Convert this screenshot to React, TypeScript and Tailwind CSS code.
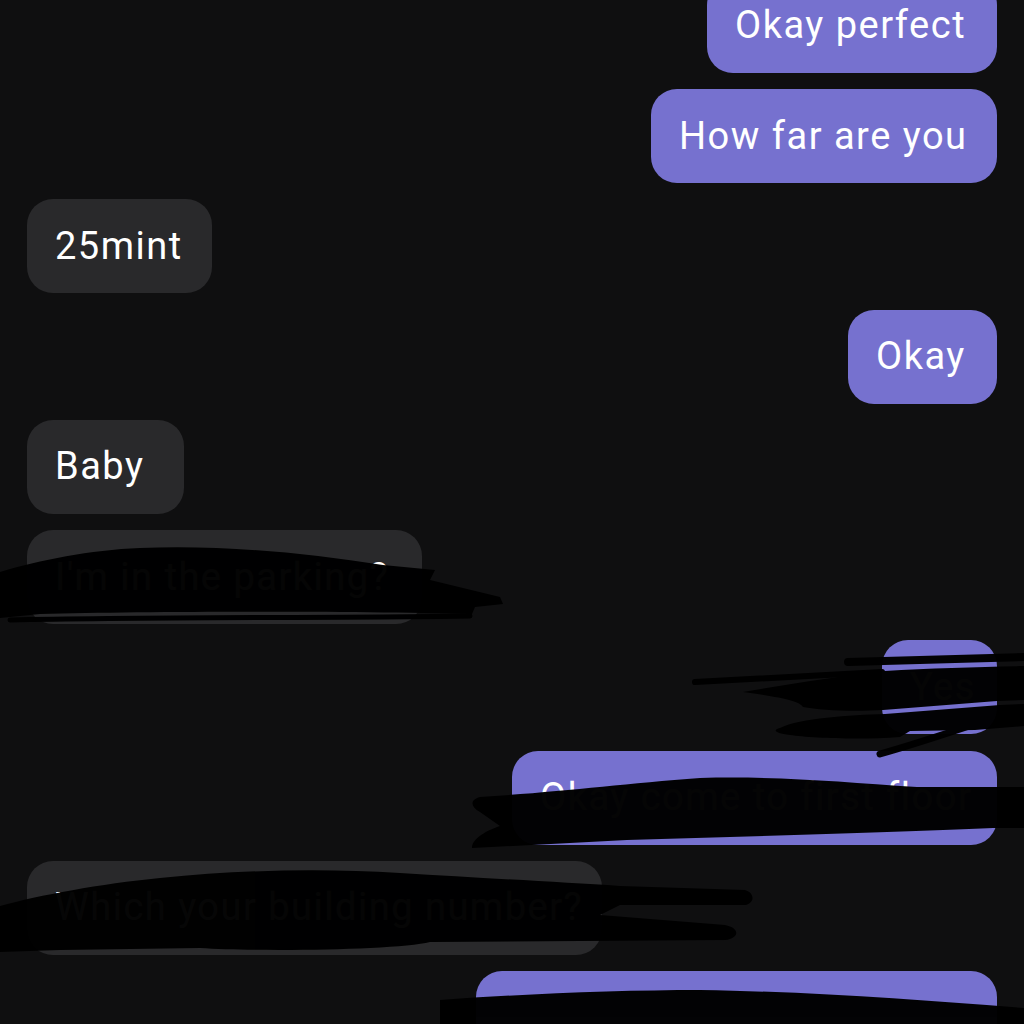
import React from "react"

type Msg = { text: string; mine: boolean; w: string }

const messages: Msg[] = [
  { text: "Okay perfect", mine: true, w: "w-[290px]" },
  { text: "How far are you", mine: true, w: "w-[346px]" },
  { text: "25mint", mine: false, w: "w-[185px]" },
  { text: "Okay", mine: true, w: "w-[149px]" },
  { text: "Baby", mine: false, w: "w-[157px]" },
  { text: "I'm in the parking?", mine: false, w: "w-[395px]" },
  { text: "Yes", mine: true, w: "w-[115px]" },
  { text: "Okay come to first floor", mine: true, w: "w-[485px]" },
  { text: "Which your building number?", mine: false, w: "w-[575px]" },
  // last bubble runs past the bottom edge and is fully scribbled out
  { text: "", mine: true, w: "w-[521px]" },
]

function Bubble({ msg }: { msg: Msg }) {
  return (
    <div className={`flex ${msg.mine ? "justify-end" : "justify-start"}`}>
      <div
        className={`${msg.w} h-[94px] shrink-0 rounded-[26px] px-[28px] flex items-center whitespace-nowrap overflow-hidden text-[38px] tracking-[1.5px] text-white ${
          msg.mine ? "bg-[#7671cf]" : "bg-[#29292b]"
        }`}
      >
        {msg.text}
      </div>
    </div>
  )
}

// marker scribbles drawn over the screenshot
function Scribbles() {
  return (
    <svg className="absolute inset-0 pointer-events-none" width="1024" height="1024" viewBox="0 0 1024 1024">
      <g opacity="0.975" fill="#000" stroke="#000" strokeLinecap="round" strokeLinejoin="round">
        {/* parking bubble */}
        <path
          stroke="none"
          d="M0 572 C40 560 90 550 140 548 C220 545 300 552 383 565 L435 570 L430 580 L500 597 L503 604 L475 607 L472 614 C350 611 150 611 40 614 L0 618 Z"
        />
        <path fill="none" strokeWidth="5" d="M10 620 C150 617 350 618 470 616" />

        {/* small purple bubble */}
        <path fill="none" strokeWidth="8" d="M848 662 L1024 657" />
        <path fill="none" strokeWidth="6" d="M695 682 C780 678 840 674 882 672" />
        <path
          stroke="none"
          d="M743 692 C790 684 840 676 885 671 C930 668 980 667 1024 666 L1024 700 L997 701 L883 710 C850 712 820 710 803 707 C800 701 780 697 743 692 Z"
        />
        <path
          stroke="none"
          d="M780 728 C800 718 850 715 885 714 L1000 705 L1024 704 L1024 726 L975 730 L910 731 L900 737 C860 740 810 738 790 735 C775 733 772 730 780 728 Z"
        />
        <path fill="none" strokeWidth="7" d="M880 754 C930 740 980 722 1024 708" />

        {/* long purple bubble */}
        <path
          stroke="none"
          d="M480 797 C560 792 620 784 700 778 C780 776 840 782 917 787 L1024 787 L1024 828 L993 828 C900 832 760 836 627 840 L472 848 C472 838 488 830 500 826 L480 812 C470 806 470 800 480 797 Z"
        />

        {/* gray question bubble */}
        <path
          stroke="none"
          d="M0 906 C40 895 100 884 160 878 C240 870 320 868 400 873 C480 878 560 882 620 886 L745 890 C755 893 755 903 745 905 L620 905 L600 915 L725 925 C740 928 740 938 725 940 L430 942 C400 950 260 952 200 948 L60 950 L0 952 Z"
        />

        {/* last bubble */}
        <path stroke="none" d="M440 1000 C520 994 620 990 700 990 C820 992 920 1000 1024 1008 L1024 1024 L440 1024 Z" />
      </g>
    </svg>
  )
}

export default function App() {
  return (
    <div className="relative w-full h-[1024px] overflow-hidden bg-[#0f0f10] font-['Roboto',_'Liberation_Sans',_sans-serif]">
      <div className="flex flex-col gap-[16.25px] px-[27px] -mt-[21.25px]">
        {messages.map((m, i) => (
          <Bubble key={i} msg={m} />
        ))}
      </div>
      <Scribbles />
    </div>
  )
}
